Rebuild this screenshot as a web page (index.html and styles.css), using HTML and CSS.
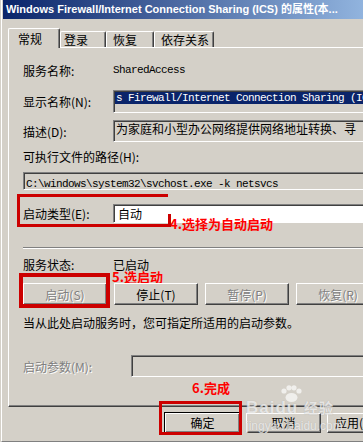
FILE: index.html
```html
<!DOCTYPE html>
<html lang="zh-CN">
<head>
  <meta charset="UTF-8">
  <meta name="viewport" content="width=device-width, initial-scale=1.0">
  <title>服务属性</title>
  <link rel="stylesheet" href="styles.css">
</head>
<body>
<div class="window">
  <div class="titlebar">Windows Firewall/Internet Connection Sharing (ICS) 的属性(本...</div>

  <div class="tabs">
    <div class="tab active">常规</div>
    <div class="tab t-login">登录</div>
    <div class="tab t-recover">恢复</div>
    <div class="tab t-deps">依存关系</div>
  </div>

  <div class="panel">
    <div class="row r-name">
      <span class="label">服务名称:</span>
      <span class="mono">SharedAccess</span>
    </div>
    <div class="row r-display">
      <span class="label">显示名称(N):</span>
      <div class="field"><span class="mono sel">s Firewall/Internet Connection Sharing (ICS)</span></div>
    </div>
    <div class="row r-desc">
      <span class="label">描述(D):</span>
      <div class="field"><span class="desc">为家庭和小型办公网络提供网络地址转换、寻</span></div>
    </div>
    <div class="row r-pathlabel"><span class="label">可执行文件的路径(H):</span></div>
    <div class="row r-path">
      <div class="field"><span class="mono">C:\windows\system32\svchost.exe -k netsvcs</span></div>
    </div>
    <div class="row r-type">
      <span class="label">启动类型(E):</span>
      <div class="field combo"><span>自动</span></div>
      <span class="note note-4">4.选择为自动启动</span>
    </div>
    <div class="sep"></div>
    <div class="row r-status">
      <span class="label">服务状态:</span>
      <span>已启动</span>
      <span class="note note-5">5.选启动</span>
    </div>
    <div class="row r-btns">
      <button class="btn wide" disabled>启动(S)</button>
      <button class="btn wide">停止(T)</button>
      <button class="btn wide" disabled>暂停(P)</button>
      <button class="btn wide" disabled>恢复(R)</button>
    </div>
    <div class="row r-hint">当从此处启动服务时，您可指定所适用的启动参数。</div>
    <div class="row r-param">
      <span class="label param-label">启动参数(M):</span>
      <div class="field"></div>
    </div>
    <div class="row r-done"><span class="note">6.完成</span></div>
  </div>

  <div class="footer">
    <button class="btn small default">确定</button>
    <button class="btn small">取消</button>
    <button class="btn small apply">应用(A)</button>
  </div>
</div>

<!-- red annotation frames -->
<div class="mark mark-type"></div>
<div class="mark mark-start"></div>
<div class="mark mark-ok"></div>

<div class="watermark">
  <svg class="paw" width="24" height="18" viewBox="0 0 24 18">
    <circle cx="5" cy="6" r="2.6"/>
    <circle cx="10" cy="2.8" r="2.6"/>
    <circle cx="15" cy="2.8" r="2.6"/>
    <circle cx="20" cy="6" r="2.6"/>
    <ellipse cx="12.5" cy="12.5" rx="6" ry="4.5"/>
  </svg>
  <div class="wm-logo">Bai<span class="wm-du">du</span> <span class="wm-cn">经验</span></div>
  <div class="wm-url">jingyan.baidu.com</div>
</div>
</body>
</html>
```

FILE: styles.css
```css
* {
  margin: 0;
  padding: 0;
  box-sizing: border-box;
}

body {
  background: #d4d0c8;
  font-family: "Noto Sans CJK SC", "Liberation Sans", sans-serif;
  font-size: 12px;
  color: #000;
  overflow: hidden;
  width: 363px;
  height: 442px;
  position: relative;
}

.window {
  width: 440px;
  height: 442px;
  margin-left: 1px;
  border-left: 1px solid #fff;
  border-bottom: 1px solid #808080;
}

.titlebar {
  margin-left: 1px;
  height: 19px;
  padding-left: 3px;
  line-height: 19px;
  background: linear-gradient(to right, #0a246a, #a6caf0 95%);
  color: #fff;
  font-family: "Liberation Sans", "Noto Sans CJK SC", sans-serif;
  font-weight: bold;
  font-size: 11px;
  white-space: nowrap;
  overflow: hidden;
}

/* tabs */
.tabs {
  display: flex;
  align-items: flex-start;
  margin-top: 9px;
  padding-left: 6px;
  height: 19px;
}

.tab {
  height: 16px;
  margin-top: 3px;
  line-height: 15px;
  border-top: 1px solid #fff;
  border-left: 1px solid #fff;
  border-right: 1px solid #404040;
  border-radius: 2px 2px 0 0;
  box-shadow: inset -1px 0 #808080;
  white-space: nowrap;
}

.tab.active {
  position: relative;
  z-index: 2;
  width: 52px;
  height: 20px;
  margin-top: 0;
  padding-left: 9px;
  line-height: 19px;
  background: #d4d0c8;
}

.t-login {
  width: 46px;
  padding-left: 3px;
}

.t-recover {
  width: 48px;
  padding-left: 6px;
}

.t-deps {
  width: 60px;
  padding-left: 6px;
}

/* page */
.panel {
  margin-left: 6px;
  height: 360px;
  padding: 14px 0 0 14px;
  border-top: 1px solid #fff;
  border-left: 1px solid #fff;
  border-bottom: 1px solid #404040;
  box-shadow: inset 0 -1px #808080;
}

.row {
  display: flex;
  align-items: center;
  position: relative;
  white-space: nowrap;
}

.label {
  width: 90px;
  flex: none;
}

.mono {
  font-family: "Liberation Mono", monospace;
  font-size: 11px;
  letter-spacing: -0.6px;
}

.field {
  flex: 1;
  align-self: stretch;
  border: 1px solid;
  border-color: #808080 #fff #fff #808080;
  box-shadow: inset 1px 1px #404040;
  padding: 1px 0 0 1px;
  overflow: hidden;
}

.r-name { height: 16px; }

.r-display {
  height: 23px;
  margin-top: 12px;
}

.sel {
  display: block;
  height: 12px;
  line-height: 12px;
  padding-left: 1px;
  background: #0a246a;
  color: #fff;
}

.r-desc {
  height: 22px;
  margin-top: 7px;
}

.desc {
  display: block;
  line-height: 13px;
  padding-left: 1px;
}

.r-pathlabel {
  height: 16px;
  margin-top: 6px;
}

.r-path {
  height: 18px;
  margin-top: 8px;
}

.r-path .field {
  padding: 1px 0 0 2px;
  line-height: 15px;
}

.r-type {
  height: 19px;
  margin-top: 14px;
}

.combo {
  background: #fff;
  padding: 0 0 0 4px;
  line-height: 17px;
}

.sep {
  margin-top: 24px;
  height: 2px;
  border-top: 1px solid #808080;
  border-bottom: 1px solid #fff;
}

.r-status {
  height: 16px;
  margin-top: 7px;
}

.r-btns {
  height: 22px;
  margin-top: 11px;
  gap: 7px;
}

.r-hint {
  height: 16px;
  margin-top: 9px;
}

.r-param {
  height: 22px;
  margin-top: 25px;
}

.param-label {
  width: 108px;
  color: #808080;
  text-shadow: 1px 1px #fff;
}

.r-done {
  height: 16px;
  margin-top: 2px;
  padding-left: 169px;
}

/* buttons */
.btn {
  font-family: "Noto Sans CJK SC", "Liberation Sans", sans-serif;
  font-size: 12px;
  color: #000;
  background: #d4d0c8;
  border: 1px solid;
  border-color: #fff #404040 #404040 #fff;
  box-shadow: inset -1px -1px #808080;
  flex: none;
}

.btn:disabled {
  color: #808080;
  text-shadow: 1px 1px #fff;
}

.btn.wide {
  width: 84px;
  height: 22px;
}

.footer {
  display: flex;
  gap: 6px;
  margin-top: 6px;
  padding-left: 163px;
}

.btn.small {
  width: 75px;
  height: 20px;
  line-height: 16px;
}

.btn.apply {
  text-align: left;
  padding-left: 7px;
}

.btn.default {
  outline: 1px solid #000;
}

/* annotations */
.note {
  color: #ff0000;
  font-weight: bold;
  font-size: 13px;
}

.note-4 {
  position: absolute;
  left: 147px;
  top: 10px;
}

.note-5 {
  position: absolute;
  left: 89px;
  top: 15px;
  line-height: 12px;
}

.mark {
  position: absolute;
  border: 3px solid #cc0000;
}

.mark-type {
  left: 17px;
  top: 194px;
  width: 151px;
  height: 33px;
  border-right: none;
}

.mark-type::after {
  content: "";
  position: absolute;
  right: -3px;
  top: 17px;
  width: 3px;
  height: 13px;
  background: #cc0000;
}

.mark-start {
  left: 19px;
  top: 273px;
  width: 91px;
  height: 35px;
  border-width: 4px;
}

.mark-ok {
  left: 159px;
  top: 401px;
  width: 83px;
  height: 34px;
}

/* watermark */
.watermark {
  position: absolute;
  left: 246px;
  top: 385px;
  color: rgba(255, 255, 255, 0.7);
  text-shadow: 0 0 1px rgba(140, 140, 140, 0.6);
  font-family: "Liberation Sans", sans-serif;
}

.paw {
  position: absolute;
  left: 33px;
  top: 0;
  fill: rgba(255, 255, 255, 0.65);
}

.wm-logo {
  margin-top: 14px;
  font-size: 17px;
  font-weight: bold;
  line-height: 17px;
  letter-spacing: 1px;
}

.wm-cn {
  font-family: "Noto Sans CJK SC", sans-serif;
  font-size: 14px;
}

.wm-url {
  margin-top: 4px;
  font-size: 12px;
  line-height: 12px;
}
```
